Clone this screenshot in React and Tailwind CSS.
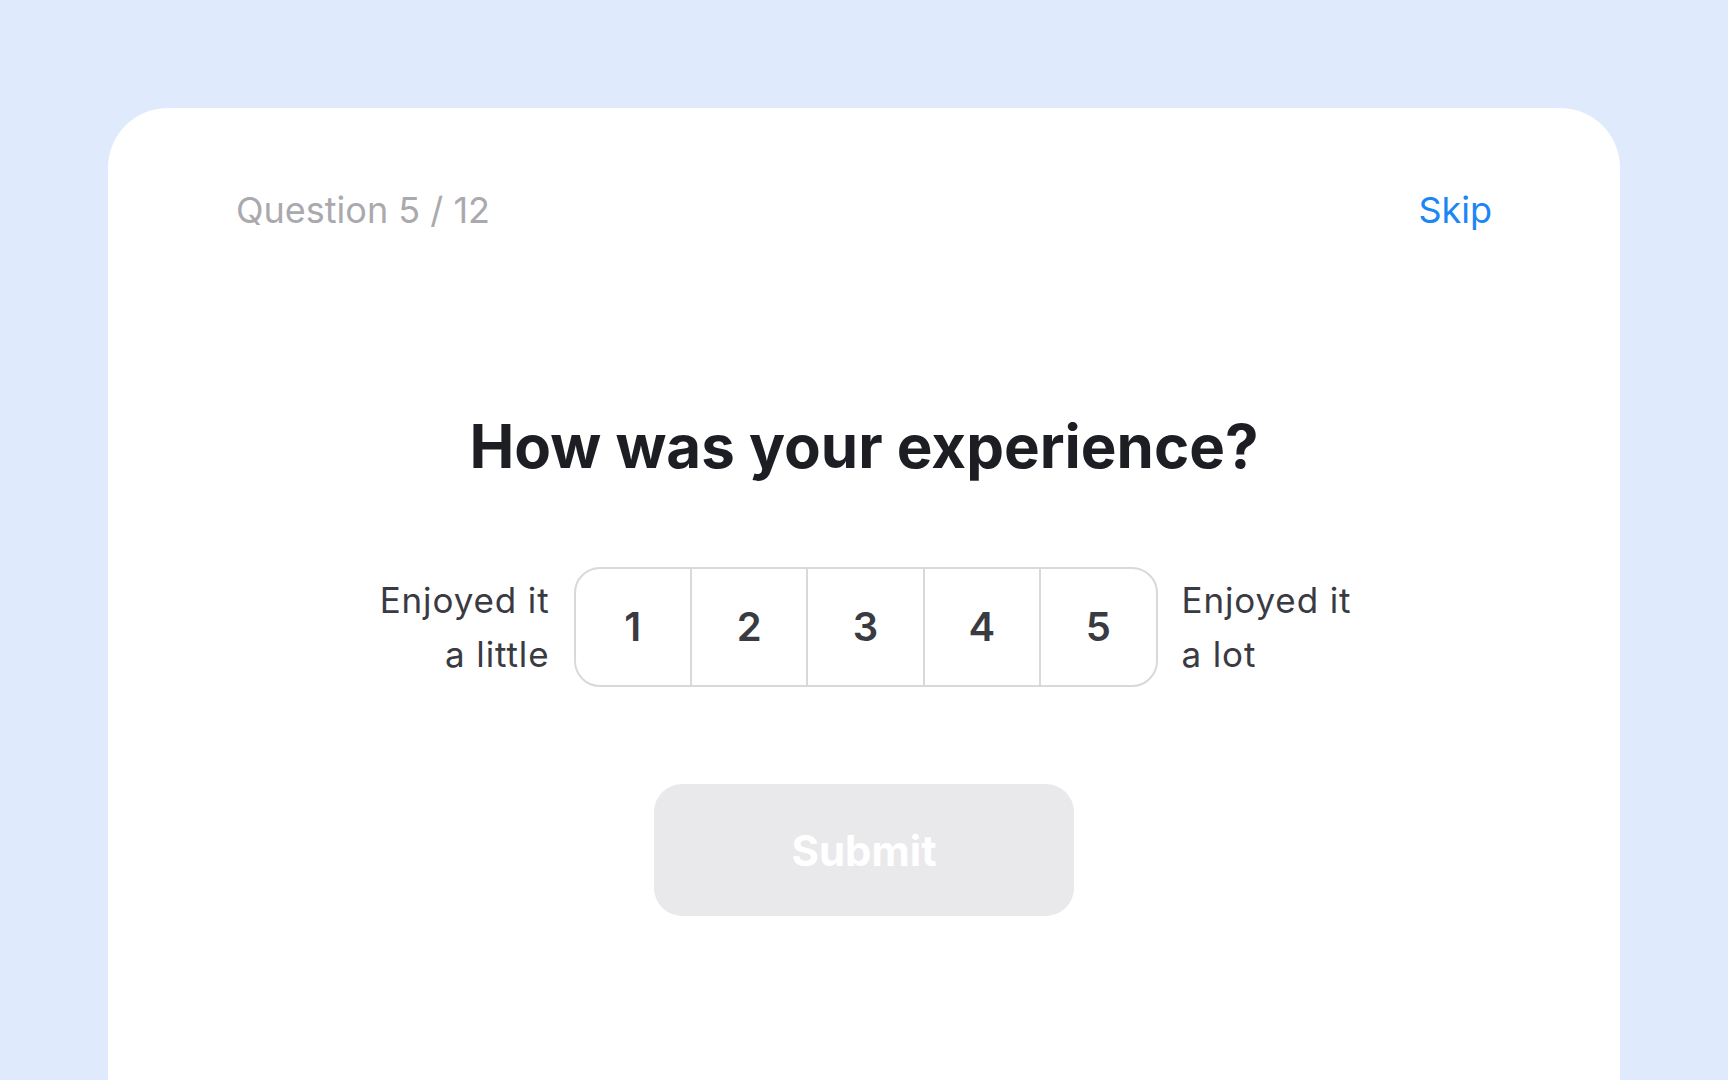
import { useState } from 'react';

const SCALE = [1, 2, 3, 4, 5];

export default function App() {
  const [picked, setPicked] = useState(null);

  return (
    <div className="h-screen overflow-hidden bg-[#dfebfd] px-[108px] pt-[108px] font-['Inter',sans-serif]">
      <div className="h-[1100px] rounded-[60px] bg-white px-[128px] pt-[80px]">
        {/* progress + skip */}
        <div className="flex items-center justify-between text-[36px] leading-[44px]">
          <span className="text-[#a9a9ae]">Question 5 / 12</span>
          <button className="text-[#1b86f6]">Skip</button>
        </div>

        <h1 className="mt-[178px] text-center text-[60px] font-bold leading-[72px] text-[#1d1d24]">
          How was your experience?
        </h1>

        {/* 1-5 rating scale */}
        <div className="mt-[85px] flex items-center justify-center gap-6 pl-[3px] text-[35px] leading-[54px] tracking-[0.025em] text-[#3a3a42]">
          <div className="text-right">
            Enjoyed it
            <br />
            a little
          </div>
          <div className="flex h-[120px] w-[584px] divide-x-2 divide-[#d9d9dc] overflow-hidden rounded-[26px] border-2 border-[#d9d9dc] tracking-normal">
            {SCALE.map((n) => (
              <button
                key={n}
                onClick={() => setPicked(n)}
                className={`flex flex-1 items-center justify-center text-[40px] font-semibold ${
                  picked === n ? 'bg-[#eaf3ff] text-[#1b86f6]' : 'text-[#3a3a42]'
                }`}
              >
                {n}
              </button>
            ))}
          </div>
          <div className="text-left">
            Enjoyed it
            <br />
            a lot
          </div>
        </div>

        <div className="mt-[97px] flex justify-center">
          <button
            disabled={picked === null}
            className={`h-[132px] w-[420px] rounded-[28px] text-[42px] font-bold text-white ${
              picked === null ? 'bg-[#e9e9eb]' : 'bg-[#1b86f6]'
            }`}
          >
            Submit
          </button>
        </div>
      </div>
    </div>
  );
}
